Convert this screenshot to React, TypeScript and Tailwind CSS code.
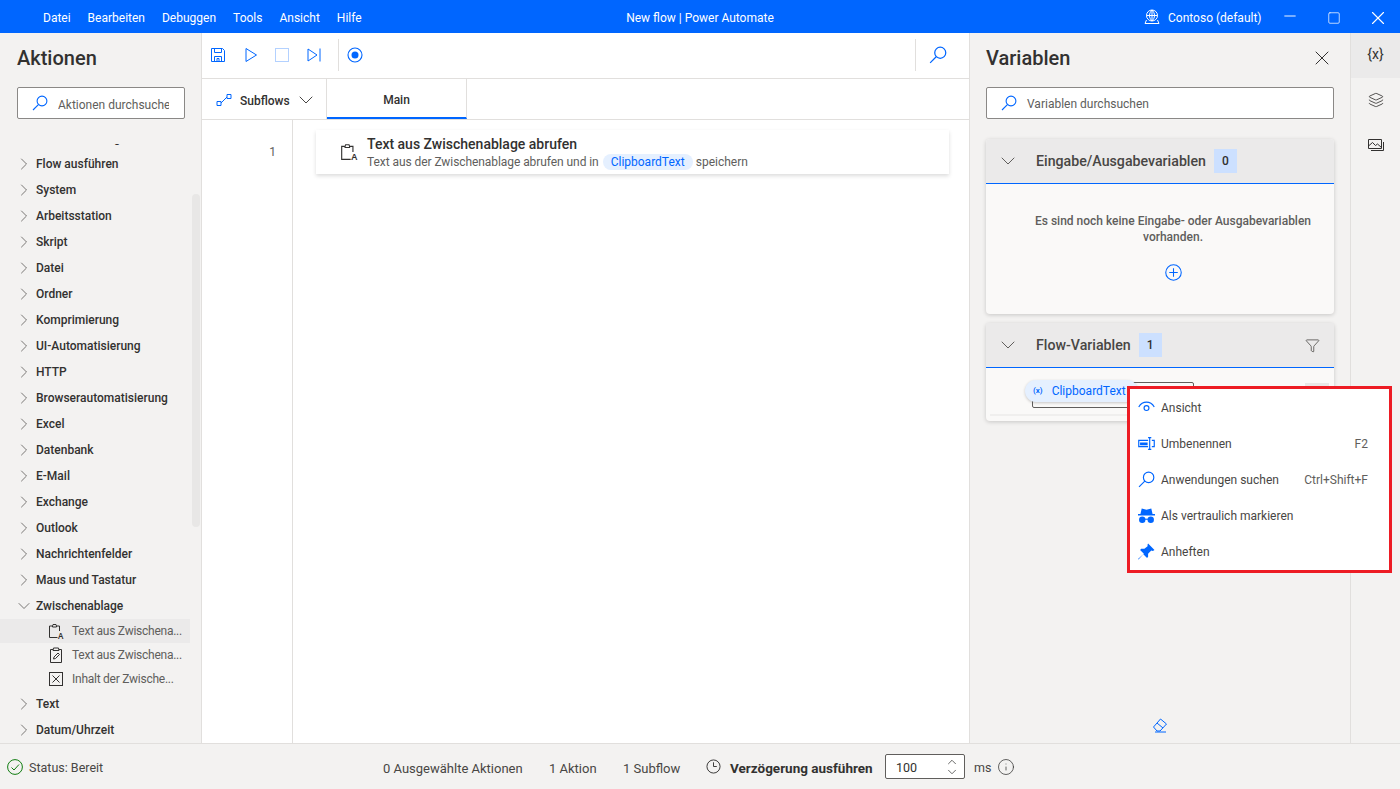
import { ChevronDown, ChevronRight, ChevronUp, Filter, Info, Layers, Minus, Square, X } from "lucide-react";

const font = "font-['Roboto','Noto_Sans',sans-serif]";

const menuItems = ["Datei", "Bearbeiten", "Debuggen", "Tools", "Ansicht", "Hilfe"];

const groupsBefore = [
  "Flow-Steuerung",
  "Flow ausführen",
  "System",
  "Arbeitsstation",
  "Skript",
  "Datei",
  "Ordner",
  "Komprimierung",
  "UI-Automatisierung",
  "HTTP",
  "Browserautomatisierung",
  "Excel",
  "Datenbank",
  "E-Mail",
  "Exchange",
  "Outlook",
  "Nachrichtenfelder",
  "Maus und Tastatur",
];

function SearchIcon({ className }: { className?: string }) {
  return (
    <svg viewBox="0 0 16 16" fill="none" stroke="currentColor" strokeWidth="1.1" className={className}>
      <circle cx="10" cy="6" r="4.9" />
      <path d="M6.4 9.6 1 15" />
    </svg>
  );
}

function ClipboardA({ className }: { className?: string }) {
  return (
    <svg viewBox="0 0 16 16" fill="none" stroke="currentColor" strokeWidth="1" className={className}>
      <path d="M9.500 14.500H1.500V3h2.500M9 3h2.500v5M4.500 3 5 1.500h3L8.500 3v1h-4z" />
      <text x="10" y="15.500" fontSize="8" fill="currentColor" stroke="none" fontWeight="600" fontFamily="Noto Sans">A</text>
    </svg>
  );
}

function ClipboardPen({ className }: { className?: string }) {
  return (
    <svg viewBox="0 0 16 16" fill="none" stroke="currentColor" strokeWidth="1" className={className}>
      <path d="M5 2.500H2.500v13h11v-13H11M5 3.500 5.500 1h5l.5 2.500zM5.500 12l.5-2 4-4 1.500 1.500-4 4z" />
    </svg>
  );
}

function BoxX({ className }: { className?: string }) {
  return (
    <svg viewBox="0 0 16 16" fill="none" stroke="currentColor" strokeWidth="1" className={className}>
      <rect x="1.500" y="1.500" width="13" height="13" />
      <path d="m4.500 4.500 7 7m0-7-7 7" />
    </svg>
  );
}

function TreeRow({ label, open }: { label: string; open?: boolean }) {
  return (
    <div className="flex h-[26px] items-center pl-[14px] text-[12px] font-medium whitespace-nowrap text-[#323130]">
      {open ? (
        <ChevronDown className="h-5 w-5 text-[#605e5c]" strokeWidth={1} />
      ) : (
        <ChevronRight className="h-5 w-5 text-[#605e5c]" strokeWidth={1} />
      )}
      <span className="ml-[2px]">{label}</span>
    </div>
  );
}

function SubRow({ label, icon, active }: { label: string; icon: React.ReactNode; active?: boolean }) {
  return (
    <div className={`flex h-6 w-[190px] items-center pl-[48px] text-[12px] tracking-[-0.25px] whitespace-nowrap text-[#605e5c] ${active ? "bg-[#ebeaea]" : ""}`}>
      <span className="flex h-4 w-4 items-center text-[#323130]">{icon}</span>
      <span className="ml-2">{label}</span>
    </div>
  );
}

function Sidebar() {
  return (
    <aside className="relative flex w-[202px] shrink-0 flex-col border-r border-[#e1dfdd] bg-[#f3f2f1]">
      <h1 className="ml-[17px] mt-[9px] text-[20px] leading-8 font-medium text-[#323130]">Aktionen</h1>
      <div className="ml-[17px] mt-[13px] flex h-8 w-[168px] items-center overflow-hidden rounded-[2px] border border-[#8a8886] bg-white pl-[14px] text-[12px] text-[#605e5c]">
        <SearchIcon className="h-4 w-4 shrink-0 text-[#0066ff]" />
        <span className="ml-[10px] w-[111px] shrink-0 overflow-hidden pt-[3px] whitespace-nowrap">Aktionen durchsuchen</span>
      </div>
      <div className="mt-[25px] flex-1 overflow-hidden">
        <div className="-mt-[19px]">
          {groupsBefore.map((g) => (
            <TreeRow key={g} label={g} />
          ))}
          <TreeRow label="Zwischenablage" open />
          <SubRow label="Text aus Zwischena..." icon={<ClipboardA className="h-[18px] w-[18px]" />} active />
          <SubRow label="Text aus Zwischena..." icon={<ClipboardPen className="h-[16px] w-[16px]" />} />
          <SubRow label="Inhalt der Zwische..." icon={<BoxX className="h-[16px] w-[16px]" />} />
          <TreeRow label="Text" />
          <TreeRow label="Datum/Uhrzeit" />
        </div>
      </div>
      <div className="absolute left-[192px] top-[161px] h-[333px] w-2 rounded bg-[#e8e7e6]" />
    </aside>
  );
}

function Editor() {
  return (
    <main className="flex w-[768px] shrink-0 flex-col border-r border-[#e1dfdd] bg-white">
      <div className="flex h-[46px] shrink-0 items-center border-b border-[#e1dfdd] pb-px pl-[8px] text-[#0066ff]">
        <svg viewBox="0 0 16 16" fill="none" stroke="currentColor" strokeWidth="1" className="h-4 w-4">
          <path d="M1.500 1.500h11l2 2v11h-13zM4.500 1.500v4h7v-4M4.500 14.500v-5h7v5M7 14.500v-3h2v3" />
        </svg>
        <svg viewBox="0 0 16 16" fill="none" stroke="currentColor" strokeWidth="1" className="ml-[17px] h-4 w-4">
          <path d="M3 1.500v13L13.500 8z" />
        </svg>
        <div className="ml-[16px] h-[14px] w-[14px] border border-[#b3d1ff]" />
        <svg viewBox="0 0 16 16" fill="none" stroke="currentColor" strokeWidth="1" className="ml-[17px] h-4 w-4">
          <path d="M2 2v12l9-6zM14 1.500v13" />
        </svg>
        <div className="ml-[16px] h-8 w-px bg-[#e1dfdd]" />
        <svg viewBox="0 0 16 16" fill="none" stroke="currentColor" className="ml-[8px] h-4 w-4">
          <circle cx="8" cy="8" r="7" strokeWidth="1.100" />
          <circle cx="8" cy="8" r="3.500" fill="currentColor" stroke="none" />
        </svg>
        <div className="ml-[552px] h-8 w-px bg-[#e1dfdd]" />
        <SearchIcon className="ml-[13px] h-[18px] w-[18px]" />
      </div>
      <div className="flex h-[41px] shrink-0 border-b border-[#e1dfdd] text-[12px] font-medium text-[#323130]">
        <div className="flex w-[125px] items-center border-r border-[#e1dfdd] pl-[14px] pt-[2px]">
          <svg viewBox="0 0 16 16" fill="none" stroke="#0066ff" strokeWidth="1" className="h-4 w-4">
            <path d="M1 9.500h4v4H1zM11 2.500h4v4h-4zM5 11 11 5" />
          </svg>
          <span className="ml-2 w-[54px] pt-[2px]">Subflows</span>
          <ChevronDown className="h-6 w-6 text-[#484644]" strokeWidth={1} />
        </div>
        <div className="flex w-[140px] items-center justify-center border-r border-b-2 border-r-[#e1dfdd] border-b-[#0066ff] pt-[4px]">Main</div>
      </div>
      <div className="flex min-h-0 flex-1">
        <div className="w-[91px] shrink-0 border-r border-[#e1dfdd] pr-[16px] pt-[24px] text-right text-[12px] leading-4 text-[#605e5c]">1</div>
        <div className="flex-1 pl-[23px] pr-[20px] pt-[10px]">
          <div className="flex h-[44px] items-center bg-white pl-[24px] shadow-[0_2px_4px_rgba(0,0,0,0.14)]">
            <ClipboardA className="h-[18px] w-[18px] text-[#323130]" />
            <div className="ml-[9px]">
              <div className="text-[14px] leading-[18px] font-medium text-[#323130]">Text aus Zwischenablage abrufen</div>
              <div className="mt-px flex items-center text-[12px] leading-4 text-[#605e5c]">
                <span className="tracking-[-0.07px]">Text aus der Zwischenablage abrufen und in</span>
                <span className="ml-[4px] rounded-full bg-[#e5f0ff] px-2 text-[#0066ff]">ClipboardText</span>
                <span className="ml-[3px]">speichern</span>
              </div>
            </div>
          </div>
        </div>
      </div>
    </main>
  );
}

function Badge({ n }: { n: number }) {
  return <span className="flex h-6 w-[23px] items-center justify-center bg-[#cce0ff] text-[12px] font-medium text-[#323130]">{n}</span>;
}

function CardHeader({ title, n, filter }: { title: string; n: number; filter?: boolean }) {
  return (
    <div className="flex h-[45px] items-center border-b border-[#0066ff] bg-[#ebeaea] pl-[10px] pr-[14px]">
      <ChevronDown className="h-6 w-6 text-[#605e5c]" strokeWidth={1} />
      <span className="ml-4 pt-[2px] text-[14.200px] font-medium text-[#484644]">{title}</span>
      <span className="ml-2">
        <Badge n={n} />
      </span>
      {filter && <Filter className="ml-auto h-[15px] w-[15px] text-[#484644]" strokeWidth={1.25} />}
    </div>
  );
}

function VariablesPanel() {
  return (
    <section className="relative flex w-[381px] shrink-0 flex-col border-r border-[#e1dfdd] bg-[#f3f2f1] px-4">
      <div className="mt-[9px] flex items-center justify-between">
        <h2 className="text-[20px] leading-8 font-medium text-[#323130]">Variablen</h2>
        <X className="h-6 w-6 text-[#323130]" strokeWidth={1} />
      </div>
      <div className="mt-[13px] flex h-8 w-[348px] items-center rounded-[2px] border border-[#8a8886] bg-white pl-[14px] text-[12px] text-[#605e5c]">
        <SearchIcon className="h-4 w-4 text-[#0066ff]" />
        <span className="ml-[10px] pt-[2px]">Variablen durchsuchen</span>
      </div>
      <div className="mt-5 h-[175px] w-[348px] overflow-hidden rounded-[4px] bg-[#faf9f8] shadow-[0_1px_4px_rgba(0,0,0,0.18)]">
        <CardHeader title="Eingabe/Ausgabevariablen" n={0} />
        <div className="mt-[29px] flex flex-col items-center pl-[26px]">
          <p className="text-center text-[12px] leading-4 font-medium text-[#605e5c]">
            Es sind noch keine Eingabe- oder Ausgabevariablen
            <br />
            vorhanden.
          </p>
          <svg viewBox="0 0 16 16" fill="none" stroke="#0066ff" strokeWidth="1" className="mt-[19px] h-[17px] w-[17px]">
            <circle cx="8" cy="8" r="7.300" />
            <path d="M8 4v8M4 8h8" />
          </svg>
        </div>
      </div>
      <div className="relative mt-[9px] h-[98px] w-[348px] rounded-[4px] bg-[#faf9f8] shadow-[0_1px_4px_rgba(0,0,0,0.18)]">
        <CardHeader title="Flow-Variablen" n={1} filter />
        <div className="absolute left-[46px] top-[59px] h-[26px] w-[162px] rounded-[2px] border border-[#605e5c]" />
        <div className="absolute left-[319px] top-[60px] h-5 w-6 bg-[#e8e7e6]" />
        <div className="absolute left-[4px] right-[4px] top-[91px] h-[2px] bg-[#f0efee]" />
        <div className="absolute left-[39px] top-[57px] flex h-[22px] w-[113px] items-center rounded-full bg-[#e5f0ff] pl-[8px] text-[12px] whitespace-nowrap text-[#0066ff] shadow-[0_1px_3px_rgba(0,0,0,0.2)]">
          <span className="text-[8px] font-semibold">(x)</span>
          <span className="ml-[9px]">ClipboardText</span>
        </div>
      </div>
      <div className="mt-auto flex justify-center pb-[10px]">
        <svg viewBox="0 0 16 16" fill="none" stroke="#0066ff" strokeWidth="1" className="h-4 w-4">
          <path d="m1.500 10 7-8 6 5-6.500 7H5zM5 6l6 5M3 15h11" />
        </svg>
      </div>
    </section>
  );
}

function IconStrip() {
  return (
    <nav className="flex flex-1 flex-col bg-[#f3f2f1] text-[#323130]">
      <div className="flex h-[45px] items-center justify-center bg-[#ebeaea] pb-[2px] text-[14px]">{"{x}"}</div>
      <div className="flex h-[45px] items-center justify-center pb-[2px]">
        <Layers className="h-4 w-4" strokeWidth={1.25} />
      </div>
      <div className="flex h-[45px] items-center justify-center pb-[2px]">
        <svg viewBox="0 0 16 16" fill="none" stroke="currentColor" strokeWidth="1" className="h-4 w-4">
          <path d="M.5 2.500h13v9H.5zM15.500 5v8.500H3M.5 9l4-3.500 3 3 2-1.500 4 3.500" />
        </svg>
      </div>
    </nav>
  );
}

function ContextMenu() {
  const cls = "h-[17px] w-[17px] shrink-0 text-[#0066ff]";
  const rows = [
    {
      label: "Ansicht",
      icon: (
        <svg viewBox="0 0 16 16" fill="none" stroke="currentColor" strokeWidth="1.100" className={cls}>
          <path d="M.7 7.500C2.500 4.500 5 3 8 3s5.500 1.500 7.300 4.500" />
          <circle cx="8" cy="8.500" r="2.300" />
        </svg>
      ),
    },
    {
      label: "Umbenennen",
      shortcut: "F2",
      icon: (
        <svg viewBox="0 0 16 16" fill="none" stroke="currentColor" strokeWidth="1.100" className={cls}>
          <path d="M9.500 5H.7v6h8.800M13 5h2.300v6H13M11 2.500v11M9.500 2.500h3M9.500 13.500h3" />
          <path d="M2.500 7.500h6v1.500h-6z" fill="currentColor" />
        </svg>
      ),
    },
    { label: "Anwendungen suchen", shortcut: "Ctrl+Shift+F", icon: <SearchIcon className={cls} /> },
    {
      label: "Als vertraulich markieren",
      icon: (
        <svg viewBox="0 0 16 16" fill="currentColor" className={cls}>
          <path d="M3.500 1.500 8 2.500l4.500-1 1.200 5H16V8H0V6.500h2.300z" />
          <circle cx="4" cy="12" r="3" />
          <circle cx="12" cy="12" r="3" />
          <rect x="6" y="11" width="4" height="1" />
        </svg>
      ),
    },
    {
      label: "Anheften",
      icon: (
        <svg viewBox="0 0 16 16" fill="currentColor" className={cls}>
          <path d="M9.500.5 15.500 6.500 14 7.500 12.500 7 9.500 10 9.500 13 8.500 14 5 10.500.5 15.500 0 15 5.500 10 2 6.500 3 5.500 6 5.500 9 3 9 1.500z" />
        </svg>
      ),
    },
  ];
  return (
    <div className="absolute left-[1127px] top-[386px] flex h-[187px] w-[265px] flex-col justify-center border-[3px] border-[#ed1c24] bg-white">
      {rows.map((r) => (
        <div key={r.label} className="flex h-9 items-center pl-[8px] pr-[21px] text-[12px] whitespace-nowrap text-[#484644]">
          {r.icon}
          <span className="ml-[6px]">{r.label}</span>
          {r.shortcut && <span className="ml-auto text-[#605e5c]">{r.shortcut}</span>}
        </div>
      ))}
    </div>
  );
}

function StatusBar() {
  return (
    <footer className="flex h-[46px] shrink-0 items-center border-t border-[#e1dfdd] bg-[#f3f2f1] pl-[7px] text-[12.500px] text-[#484644]">
      <svg viewBox="0 0 16 16" fill="none" stroke="#107c10" strokeWidth="1" className="h-4 w-4">
        <circle cx="8" cy="8" r="7.400" />
        <path d="m4.500 8.500 2.500 2.500 5-5.500" />
      </svg>
      <span className="ml-[6px] w-[354px] pt-[4px]">Status: Bereit</span>
      <span className="w-[166px] pt-[4px] text-[13px]">0 Ausgewählte Aktionen</span>
      <span className="w-[74px] pt-[4px] text-[13px]">1 Aktion</span>
      <span className="w-[83px] pt-[4px] text-[13px]">1 Subflow</span>
      <svg viewBox="0 0 16 16" fill="none" stroke="#323130" strokeWidth="1" className="h-[15px] w-[15px]">
        <circle cx="8" cy="8" r="7" />
        <path d="M8 3.500V8h3.500" />
      </svg>
      <span className="ml-[9px] w-[155px] pt-[4px] text-[13.500px] font-bold whitespace-nowrap text-[#323130]">Verzögerung ausführen</span>
      <div className="flex h-[25px] w-[80px] items-center justify-between rounded-[2px] border border-[#605e5c] bg-white pl-[10px] pr-[5px] text-[#323130]">
        <span className="pt-[3px]">100</span>
        <span className="flex flex-col">
          <ChevronUp className="-mb-[2px] h-[14px] w-[14px]" strokeWidth={1.25} />
          <ChevronDown className="-mt-[2px] h-[14px] w-[14px]" strokeWidth={1.25} />
        </span>
      </div>
      <span className="ml-[9px] pt-[3px]">ms</span>
      <Info className="ml-[6px] h-[18px] w-[18px] text-[#323130]" strokeWidth={1} />
    </footer>
  );
}

export default function App() {
  return (
    <div className={`relative flex h-[789px] w-[1400px] flex-col overflow-hidden bg-[#f3f2f1] ${font}`}>
      <header className="flex h-[33px] shrink-0 items-center bg-[#0066ff] text-[12px] text-white">
        <div className="flex w-[522px] gap-[17px] pl-[43px] pt-[3px]">
          {menuItems.map((m) => (
            <span key={m}>{m}</span>
          ))}
        </div>
        <span className="w-[356px] pt-[3px] text-center">New flow | Power Automate</span>
        <svg viewBox="0 0 16 16" fill="none" stroke="currentColor" strokeWidth="1" className="ml-[266px] h-4 w-4">
          <circle cx="8" cy="6.500" r="5.500" />
          <path d="M2.500 6.500h11M8 1v11M5.500 6.500c0-2 1-4 2.500-5.500 1.500 1.500 2.500 3.500 2.500 5.500s-1 4-2.500 5.500c-1.500-1.500-2.500-3.500-2.500-5.500M2.500 11 1 14.500h14L13.500 11" />
        </svg>
        <span className="ml-2 pt-[3px]">Contoso (default)</span>
        <div className="ml-auto flex pt-[2px]">
          <span className="flex w-11 justify-center">
            <Minus className="h-[18px] w-[18px]" strokeWidth={1.25} />
          </span>
          <span className="flex w-11 items-center justify-center">
            <Square className="h-[14px] w-[14px]" strokeWidth={1.25} />
          </span>
          <span className="flex w-11 items-center justify-center">
            <X className="h-[22px] w-[22px]" strokeWidth={1.25} />
          </span>
        </div>
      </header>
      <div className="flex min-h-0 flex-1">
        <Sidebar />
        <Editor />
        <VariablesPanel />
        <IconStrip />
      </div>
      <StatusBar />
      <ContextMenu />
    </div>
  );
}
